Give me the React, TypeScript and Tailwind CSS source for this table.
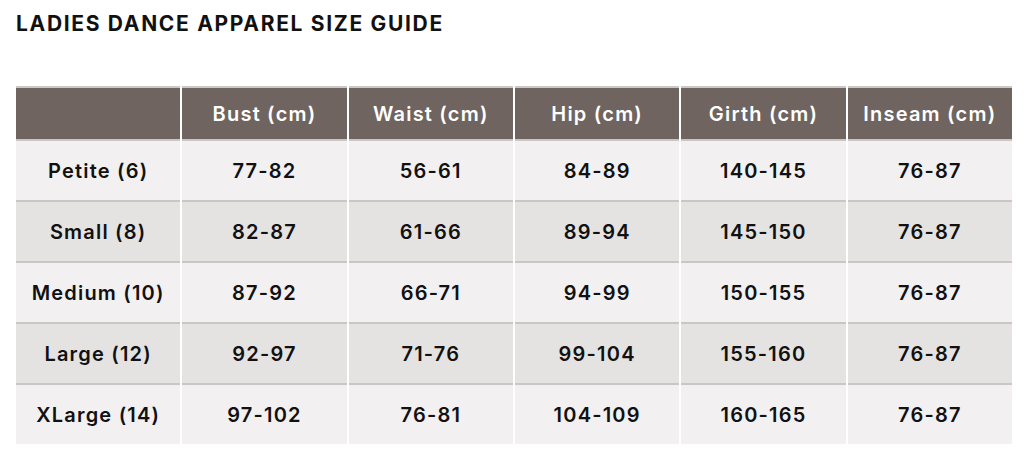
const headers = ['', 'Bust (cm)', 'Waist (cm)', 'Hip (cm)', 'Girth (cm)', 'Inseam (cm)'];

const rows = [
  ['Petite (6)', '77-82', '56-61', '84-89', '140-145', '76-87'],
  ['Small (8)', '82-87', '61-66', '89-94', '145-150', '76-87'],
  ['Medium (10)', '87-92', '66-71', '94-99', '150-155', '76-87'],
  ['Large (12)', '92-97', '71-76', '99-104', '155-160', '76-87'],
  ['XLarge (14)', '97-102', '76-81', '104-109', '160-165', '76-87'],
];

export default function App() {
  return (
    <div className="w-[1026px] h-[464px] bg-white px-4 pt-[10px]" style={{ fontFamily: 'Inter, "Liberation Sans", sans-serif' }}>
      <h1 className="text-[21px] font-bold text-[#111] leading-[28px] tracking-[0.08em]">
        LADIES DANCE APPAREL SIZE GUIDE
      </h1>

      {/* size table */}
      <div className="mt-[48px] w-[996px] grid grid-cols-6 gap-x-[2px]">
        {headers.map((h, i) => (
          <div
            key={i}
            className="h-[53px] border-t-2 border-[#cdc7c5] bg-[#6f6460] flex items-center justify-center text-white text-[20px] font-semibold tracking-[0.06em]"
          >
            {h}
          </div>
        ))}
        {rows.map((row, r) =>
          row.map((cell, c) => (
            <div
              key={`${r}-${c}`}
              className={`h-[61px] border-t-2 border-[#ccc5c5] flex items-center justify-center text-[#111] text-[20px] font-semibold tracking-[0.06em] ${
                r % 2 === 0 ? 'bg-[#f2f0f1]' : 'bg-[#e4e3e1]'
              }`}
            >
              {cell}
            </div>
          ))
        )}
      </div>
    </div>
  );
}
